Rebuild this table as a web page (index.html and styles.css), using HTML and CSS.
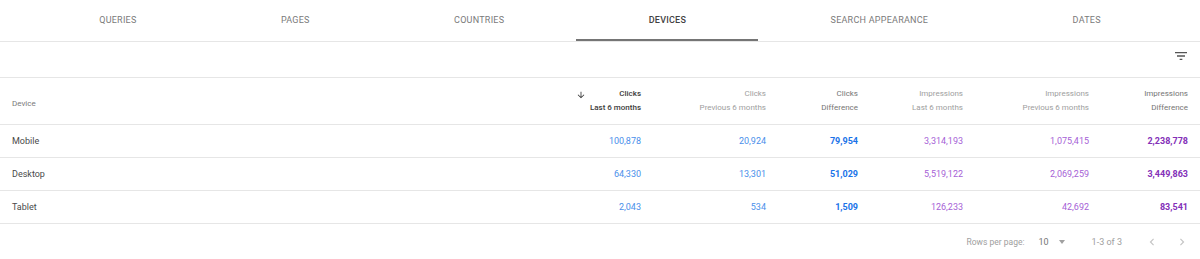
FILE: index.html
```html
<!DOCTYPE html>
<html>
<head>
<meta charset="utf-8">
<link rel="stylesheet" href="styles.css">
</head>
<body>
<div class="page">
  <nav class="tabs">
    <div class="tab">QUERIES</div>
    <div class="tab">PAGES</div>
    <div class="tab">COUNTRIES</div>
    <div class="tab active">DEVICES</div>
    <div class="tab">SEARCH APPEARANCE</div>
    <div class="tab">DATES</div>
  </nav>
  <div class="toolbar">
    <svg class="filter-icon" viewBox="0 0 24 24" width="16" height="16"><path d="M10 18h4v-2h-4v2zM3 6v2h18V6H3zm3 7h12v-2H6v2z"/></svg>
  </div>
  <div class="table">
    <div class="row head">
      <div class="hcell device-h">Device</div>
      <div class="hcell sorted">
        <svg class="sort-icon" viewBox="0 0 24 24" width="10" height="10"><path d="M20 12l-1.41-1.41L13 16.17V4h-2v12.17l-5.58-5.59L4 12l8 8 8-8z"/></svg>
        <div class="htext"><span>Clicks</span><span>Last 6 months</span></div>
      </div>
      <div class="hcell"><div class="htext"><span>Clicks</span><span>Previous 6 months</span></div></div>
      <div class="hcell diff"><div class="htext"><span>Clicks</span><span>Difference</span></div></div>
      <div class="hcell"><div class="htext"><span>Impressions</span><span>Last 6 months</span></div></div>
      <div class="hcell"><div class="htext"><span>Impressions</span><span>Previous 6 months</span></div></div>
      <div class="hcell diff"><div class="htext"><span>Impressions</span><span>Difference</span></div></div>
    </div>
    <div class="row">
      <div class="cell name">Mobile</div>
      <div class="cell clicks">100,878</div>
      <div class="cell clicks">20,924</div>
      <div class="cell clicks-diff">79,954</div>
      <div class="cell impr">3,314,193</div>
      <div class="cell impr">1,075,415</div>
      <div class="cell impr-diff">2,238,778</div>
    </div>
    <div class="row">
      <div class="cell name">Desktop</div>
      <div class="cell clicks">64,330</div>
      <div class="cell clicks">13,301</div>
      <div class="cell clicks-diff">51,029</div>
      <div class="cell impr">5,519,122</div>
      <div class="cell impr">2,069,259</div>
      <div class="cell impr-diff">3,449,863</div>
    </div>
    <div class="row">
      <div class="cell name">Tablet</div>
      <div class="cell clicks">2,043</div>
      <div class="cell clicks">534</div>
      <div class="cell clicks-diff">1,509</div>
      <div class="cell impr">126,233</div>
      <div class="cell impr">42,692</div>
      <div class="cell impr-diff">83,541</div>
    </div>
  </div>
  <div class="pager">
    <span class="pager-label">Rows per page:</span>
    <span class="pager-size">10</span>
    <span class="pager-caret"></span>
    <span class="pager-range">1-3 of 3</span>
    <svg class="chev" viewBox="0 0 24 24" width="14" height="14"><path d="M15.41 7.41L14 6l-6 6 6 6 1.41-1.41L10.83 12z"/></svg>
    <svg class="chev" viewBox="0 0 24 24" width="14" height="14"><path d="M8.59 16.59L10 18l6-6-6-6-1.41 1.41L13.17 12z"/></svg>
  </div>
</div>
</body>
</html>
```

FILE: styles.css
```css
html, body {
  margin: 0;
  padding: 0;
  background: #ffffff;
}

body {
  font-family: "Roboto", "Liberation Sans", sans-serif;
  color: #424242;
}

.page {
  width: 1200px;
}

.tabs {
  display: flex;
  height: 41px;
  padding: 0 27px;
  border-bottom: 1px solid #e6e6e6;
}

.tab {
  flex: 1 1 auto;
  display: flex;
  align-items: center;
  justify-content: center;
  font-size: 9px;
  letter-spacing: 0.25px;
  color: #7a7a7a;
  box-sizing: border-box;
  border-bottom: 2px solid transparent;
  padding-top: 1px;
}

.tab.active {
  color: #424242;
  font-weight: 500;
  border-bottom-color: #757575;
}

.toolbar {
  height: 36px;
  display: flex;
  justify-content: flex-end;
  align-items: flex-start;
  padding-right: 11px;
  box-sizing: border-box;
  border-bottom: 1px solid #e6e6e6;
}

.filter-icon {
  fill: #555555;
  margin-top: 6px;
}

.row {
  display: grid;
  grid-template-columns: 516px 125px 125px 92px 105px 126px 99px;
  height: 33px;
  box-sizing: border-box;
  border-bottom: 1px solid #e6e6e6;
  padding-right: 12px;
  width: 1200px;
}

.row.head {
  height: 47px;
}

.hcell {
  display: flex;
  justify-content: flex-end;
  align-items: flex-start;
  gap: 4px;
  padding-top: 9px;
  font-size: 8px;
  color: #9e9e9e;
}

.htext {
  display: flex;
  flex-direction: column;
  align-items: flex-end;
  line-height: 14px;
}

.hcell.sorted {
  color: #3c3c3c;
  font-weight: 500;
}

.hcell.diff {
  color: #757575;
}

.sort-icon {
  fill: #333333;
  margin-top: 3px;
}

.hcell.device-h {
  justify-content: flex-start;
  padding-left: 12px;
  padding-top: 21px;
  color: #7a7a7a;
}

.cell {
  display: flex;
  align-items: center;
  justify-content: flex-end;
  font-size: 9px;
}

.cell.name {
  justify-content: flex-start;
  padding-left: 12px;
  color: #4a4a4a;
}

.clicks {
  color: #4a8fea;
}

.clicks-diff {
  color: #1a73e8;
  font-weight: 700;
}

.impr {
  color: #a65fd6;
}

.impr-diff {
  color: #8430b8;
  font-weight: 700;
}

.pager {
  height: 35px;
  display: flex;
  align-items: center;
  justify-content: flex-end;
  padding-right: 11px;
  font-size: 8.5px;
  color: #9e9e9e;
}

.pager-label {
  margin-right: 14px;
}

.pager-size {
  color: #757575;
  font-size: 9px;
  margin-right: 10px;
}

.pager-caret {
  width: 0;
  height: 0;
  border-left: 3.5px solid transparent;
  border-right: 3.5px solid transparent;
  border-top: 4px solid #a0a0a0;
  margin-right: 27px;
}

.pager-range {
  font-size: 9px;
  margin-right: 23px;
}

.chev {
  fill: #c4c4c4;
  margin-left: 16px;
}

.pager-range + .chev {
  margin-left: 0;
}
```
